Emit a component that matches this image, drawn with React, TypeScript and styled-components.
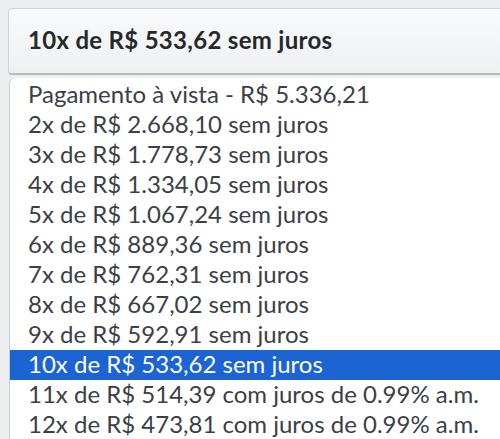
import React from "react";
import styled, { createGlobalStyle } from "styled-components";

const Global = createGlobalStyle`
  html, body { margin: 0; padding: 0; background: #eceef0; overflow: hidden; }
  body { font-family: Lato, "Noto Sans", sans-serif; }
`;

const Page = styled.div`
  width: 500px;
  height: 439px;
  padding: 8px 0 0 8px;
  box-sizing: border-box;
  overflow: hidden;
`;

const SelectBox = styled.div`
  height: 67px;
  box-sizing: border-box;
  display: flex;
  align-items: center;
  padding-left: 19px;
  padding-bottom: 4px;
  border: 1px solid #cfd3d7;
  border-bottom: 2px solid #b7bbbf;
  border-right: none;
  border-radius: 4px 0 0 4px;
  background: linear-gradient(#f9fafb, #eef0f2);
  font-size: 24px;
  line-height: 29px;
  font-weight: 700;
  letter-spacing: 0.3px;
  color: #26292c;
  white-space: nowrap;
`;

const List = styled.ul`
  list-style: none;
  margin: 3px 0 0 1px;
  padding: 2px 0 0 0;
  background: #ffffff;
  border-left: 1px solid #c9cdd1;
  border-top-left-radius: 6px;
`;

const Option = styled.li<{ $selected?: boolean }>`
  height: 30px;
  box-sizing: border-box;
  display: flex;
  align-items: center;
  padding: 0 0 2px 18px;
  font-size: 24px;
  line-height: 28px;
  white-space: nowrap;
  color: ${(p) => (p.$selected ? "#ffffff" : "#3b4046")};
  background: ${(p) => (p.$selected ? "#1c63d3" : "transparent")};
`;

const options = [
  "Pagamento à vista - R$ 5.336,21",
  "2x de R$ 2.668,10 sem juros",
  "3x de R$ 1.778,73 sem juros",
  "4x de R$ 1.334,05 sem juros",
  "5x de R$ 1.067,24 sem juros",
  "6x de R$ 889,36 sem juros",
  "7x de R$ 762,31 sem juros",
  "8x de R$ 667,02 sem juros",
  "9x de R$ 592,91 sem juros",
  "10x de R$ 533,62 sem juros",
  "11x de R$ 514,39 com juros de 0.99% a.m.",
  "12x de R$ 473,81 com juros de 0.99% a.m.",
];

export default function App() {
  return (
    <>
      <Global />
      <Page>
        <SelectBox>10x de R$ 533,62 sem juros</SelectBox>
        <List>
          {options.map((o, i) => (
            <Option key={o} $selected={i === 9}>
              {o}
            </Option>
          ))}
        </List>
      </Page>
    </>
  );
}
